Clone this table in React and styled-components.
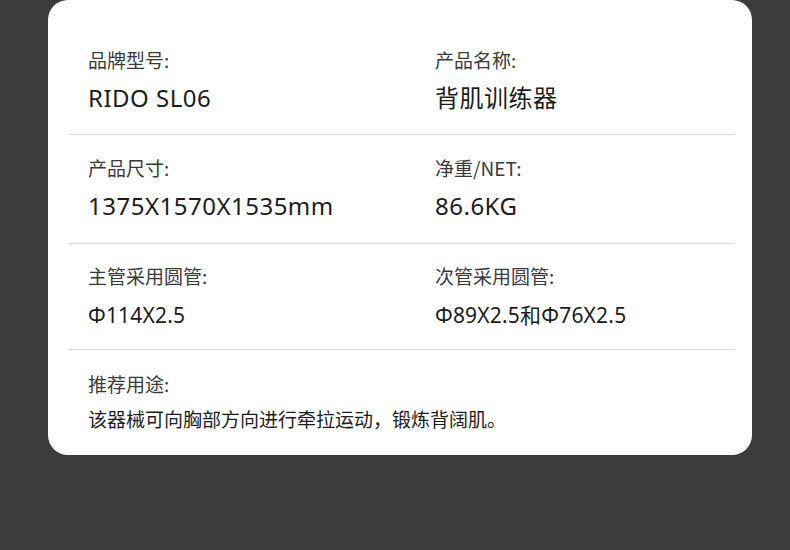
import styled, { createGlobalStyle } from "styled-components";

const GlobalStyle = createGlobalStyle`
  html, body {
    margin: 0;
    padding: 0;
    background: #3c3c3c;
  }
  body {
    font-family: "Noto Sans", "Noto Sans CJK SC", sans-serif;
  }
`;

const Page = styled.div`
  width: 790px;
  height: 550px;
  background: #3c3c3c;
  overflow: hidden;
`;

const Card = styled.section`
  margin: 0 38px 0 48px;
  width: 704px;
  box-sizing: border-box;
  background: #fff;
  border-radius: 20px;
  padding: 0 17px 0 20px;
`;

const Row = styled.div`
  display: grid;
  grid-template-columns: 347px 1fr;
  padding: ${(p) => p.$pad};
  padding-left: 20px;
  border-top: ${(p) => (p.$first ? "none" : "1px solid #dcdcdc")};
`;

const Cell = styled.div`
  display: flex;
  flex-direction: column;
  gap: ${(p) => p.$gap}px;
`;

const Label = styled.div`
  font-size: 19px;
  line-height: 26px;
  color: #3a3a3a;
  font-family: "Noto Sans CJK SC", "Noto Sans", sans-serif;
`;

const Value = styled.div`
  font-size: ${(p) => p.$size}px;
  line-height: 28px;
  letter-spacing: ${(p) => p.$spacing}px;
  color: #1c1c1c;
  white-space: nowrap;
`;

const rows = [
  {
    pad: "47px 0 22px",
    gap: 11,
    size: 24,
    spacing: 0.5,
    cells: [
      ["品牌型号:", "RIDO SL06"],
      ["产品名称:", "背肌训练器"],
    ],
  },
  {
    pad: "20px 0 23px",
    gap: 11,
    size: 24,
    spacing: 0.5,
    cells: [
      ["产品尺寸:", "1375X1570X1535mm"],
      ["净重/NET:", "86.6KG"],
    ],
  },
  {
    pad: "19px 0 20px",
    gap: 12,
    size: 21,
    spacing: 0.2,
    cells: [
      ["主管采用圆管:", "Φ114X2.5"],
      ["次管采用圆管:", "Φ89X2.5和Φ76X2.5"],
    ],
  },
  {
    pad: "21px 0 21px",
    gap: 9,
    size: 19,
    spacing: 0,
    cells: [["推荐用途:", "该器械可向胸部方向进行牵拉运动，锻炼背阔肌。"]],
  },
];

export default function App() {
  return (
    <Page>
      <GlobalStyle />
      <Card>
        {rows.map((row, i) => (
          <Row key={i} $pad={row.pad} $first={i === 0}>
            {row.cells.map(([label, value]) => (
              <Cell key={label} $gap={row.gap}>
                <Label>{label}</Label>
                <Value $size={row.size} $spacing={row.spacing}>
                  {value}
                </Value>
              </Cell>
            ))}
          </Row>
        ))}
      </Card>
    </Page>
  );
}
